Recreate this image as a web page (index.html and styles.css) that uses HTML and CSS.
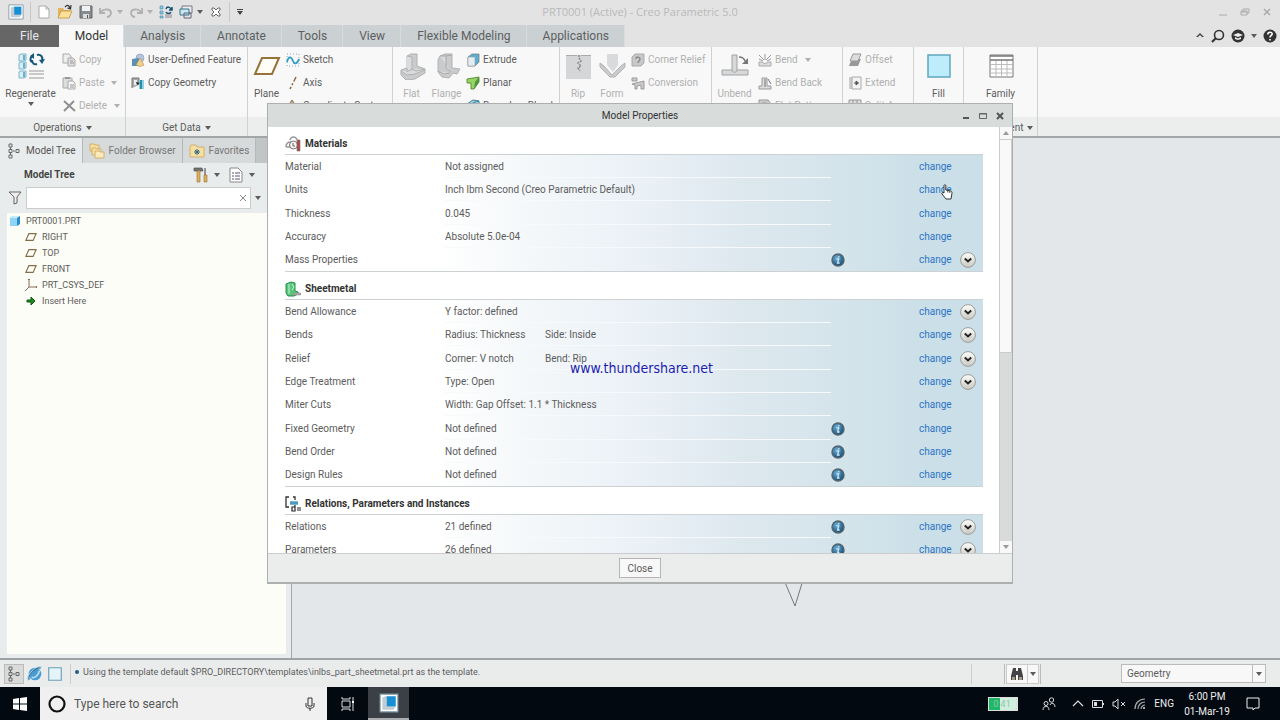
FILE: index.html
```html
<!DOCTYPE html>
<html lang="en">
<head>
    <meta charset="utf-8">
    <title>PRT0001 (Active) - Creo Parametric 5.0</title>
    <link rel="stylesheet" href="styles.css">
</head>
<body>
    <!-- shared icons -->
    <svg class="sprite" aria-hidden="true">
        <defs>
            <radialGradient id="ball" cx="40%" cy="35%" r="70%"><stop offset="0" stop-color="#6db4dc"/><stop offset="1" stop-color="#0d4670"/></radialGradient>
            <linearGradient id="knob" x2="0" y2="1"><stop offset="0" stop-color="#fdfdfb"/><stop offset="1" stop-color="#c9c9c2"/></linearGradient>
        </defs>
        <symbol id="i-down" viewBox="0 0 6 4"><path d="M0 0h6L3 4z" fill="currentColor"/></symbol>
        <symbol id="i-info" viewBox="0 0 14 14"><circle cx="7" cy="7" r="6" fill="url(#ball)" stroke="#56646e" stroke-width="1.4"/><path d="M5.500 5.800h2.200L6.600 10h2M7.800 3v1.400" stroke="#d4e8f3" stroke-width="1.300" fill="none"/></symbol>
        <symbol id="i-more" viewBox="0 0 16 16"><circle cx="8" cy="8" r="7.400" fill="url(#knob)" stroke="#9a9c98"/><path d="M4.800 6.500L8 9.500l3.200-3" fill="none" stroke="#222" stroke-width="2"/></symbol>
        <symbol id="i-plane" viewBox="0 0 14 12"><path d="M4.500 2h8.500l-3.500 8H1z" fill="none" stroke="#8a6d45" stroke-width="1.300"/></symbol>
        <symbol id="i-tree" viewBox="0 0 14 16"><path d="M2 1h3v3H2zM2 6.500h3v3H2zM2 12h3v3H2zM9 6.500h3v3H9zM3.500 4v2M3.500 10v2M6 8h2" fill="none" stroke="#666"/></symbol>
        <symbol id="i-creo" viewBox="0 0 18 18"><path d="M1 1h16v16H1z" fill="#fff" stroke="#7e98a8"/><path d="M3 4l3-1h9v9l-2 3H3z" fill="#c3ccd2"/><path d="M7 3h8v9H7z" fill="#1590d4"/></symbol>
        <symbol id="i-folder" viewBox="0 0 16 14"><path d="M1 3l1-2h5l1 2h7v10H1z" fill="#f7dfa0" stroke="#d0b070"/></symbol>
    </svg>

    <header class="titlebar">
        <div class="quick">
            <svg class="ic16" viewBox="0 0 18 18"><use href="#i-creo"/></svg>
            <span class="bar"></span>
            <button aria-label="New"><svg class="ic14" viewBox="0 0 14 14"><path d="M2 1h7l3 3v9H2z" fill="#fff" stroke="#aaa"/><path d="M9 1v3h3" fill="none" stroke="#aaa"/></svg></button>
            <button aria-label="Open"><svg class="ic16" viewBox="0 0 16 16"><path d="M1 14V4h5l1 2h6v8z" fill="#e3b55c"/><path d="M1 14l3-7h11l-3 7z" fill="#ffdf99" stroke="#b88b38" stroke-width=".7"/><path d="M8 3c3-3 4-1 5 1M14 1l-.5 4-3-1" fill="none" stroke="#333" stroke-width="1.200"/></svg></button>
            <button aria-label="Save"><svg class="ic14" viewBox="0 0 14 14"><path d="M1 1h12v12H1z" fill="#858b90" stroke="#666"/><path d="M3 1h8v5H3z" fill="#eef2f4"/><path d="M4 9h6v4H4z" fill="#ddd"/><path d="M8 10h1v3H8z" fill="#555"/></svg></button>
            <button aria-label="Undo" class="off"><svg class="ic14" viewBox="0 0 14 14"><path d="M1 3v5h5M2 7c3-4 10-3 10 1 0 2-2 4-4 4" fill="none" stroke="currentColor" stroke-width="1.800"/></svg><svg class="caret"><use href="#i-down"/></svg></button>
            <button aria-label="Redo" class="off"><svg class="ic14" viewBox="0 0 14 14"><path d="M13 3v5H8M12 7C9 3 2 4 2 8c0 2 2 4 4 4" fill="none" stroke="currentColor" stroke-width="1.800"/></svg><svg class="caret"><use href="#i-down"/></svg></button>
            <button aria-label="Regenerate"><svg class="ic14" viewBox="0 0 14 14"><path d="M1 1h3v3H1zM1 6h3v3H1zM1 11h3v2H1z" fill="#8cc8e4" stroke="#3d88aa" stroke-width=".6"/><path d="M7 4c1-3 4-2 5 0M13 2v3h-3M12 7c-1 2-4 2-5 0" fill="none" stroke="#134f70" stroke-width="1.500"/><path d="M6 10h7M6 12h7" stroke="#888"/></svg></button>
            <button aria-label="Windows"><svg class="ic14" viewBox="0 0 14 14"><path d="M3 1h10v7H3z" fill="#eee" stroke="#778"/><path d="M1 4h9v6H1z" fill="#c9e6f2" stroke="#37708c"/><path d="M5 8h7v5H5z" fill="none" stroke="#667"/></svg><svg class="caret"><use href="#i-down"/></svg></button>
            <button aria-label="Close window" class="gapped"><svg class="ic10" viewBox="0 0 10 10"><path d="M1 1h2l2 2 2-2h2v2L7 5l2 2v2H7L5 7 3 9H1V7l2-2-2-2z" fill="#fff" stroke="#666"/></svg></button>
            <span class="bar"></span>
            <button aria-label="Customize"><svg class="ic8" viewBox="0 0 8 8"><path d="M1 1h6v1H1zM1 3h6L4 7z" fill="#444"/></svg></button>
        </div>
        <h1>PRT0001 (Active) - Creo Parametric 5.0</h1>
        <div class="winbtns">
            <button aria-label="Minimize"><svg class="ic10" viewBox="0 0 10 10"><path d="M1 8h8" stroke="currentColor"/></svg></button>
            <button aria-label="Restore"><svg class="ic10" viewBox="0 0 10 10"><path d="M1 4h6v4H1zM3 4V2h6v4H7M1 5h6" fill="none" stroke="currentColor"/></svg></button>
            <button aria-label="Close"><svg class="ic10" viewBox="0 0 10 10"><path d="M2 2l6 6M8 2L2 8" stroke="currentColor" stroke-width="1.500"/></svg></button>
        </div>
    </header>

    <nav class="tabs">
        <button class="tab file">File</button>
        <button class="tab active">Model</button>
        <button class="tab">Analysis</button>
        <button class="tab">Annotate</button>
        <button class="tab">Tools</button>
        <button class="tab">View</button>
        <button class="tab">Flexible Modeling</button>
        <button class="tab">Applications</button>
        <div class="help">
            <button aria-label="Minimize ribbon"><svg class="ic10" viewBox="0 0 10 10"><path d="M1 6l4-4 4 4H7L5 4 3 6z" fill="#444"/></svg></button>
            <button aria-label="Search"><svg class="ic14" viewBox="0 0 14 14"><circle cx="8" cy="6" r="4.500" fill="none" stroke="#333" stroke-width="1.600"/><path d="M5 9l-4 4" stroke="#333" stroke-width="2.200"/></svg></button>
            <button aria-label="Learning"><svg class="ic14" viewBox="0 0 14 14"><circle cx="7" cy="7" r="6.500" fill="#333"/><path d="M2 6l5-2 5 2-5 2z" fill="#eee"/><path d="M4 8l3 1.500L10 8v2l-3 1-3-1z" fill="#eee"/></svg><svg class="caret"><use href="#i-down"/></svg></button>
            <button aria-label="Help"><svg class="ic14" viewBox="0 0 14 14"><circle cx="7" cy="7" r="6.500" fill="#333"/><path d="M4.800 5.500C4.800 2.500 9.200 2.500 9.200 5 9.200 6.500 7 6.500 7 8.500M7 10v1.500" fill="none" stroke="#fff" stroke-width="1.600"/></svg></button>
        </div>
    </nav>

    <section class="ribbon">
        <div class="group operations">
            <div class="tools">
                <button class="big"><svg class="ic28" viewBox="0 0 28 28"><path d="M2 3l2-1h5v6l-2 1H2zM2 11l2-1h5v6l-2 1H2zM2 20l2-1h5v6l-2 1H2z" fill="#d8eef7" stroke="#7ab5cc"/><path d="M7 3v5M7 11v5M7 20v5" stroke="#4f9ab8" stroke-width="1.500"/><path d="M20 3c4-1 6 2 5 5M15 10c-3-2-1-6 1-6M20 12c-3 1-5-1-5-4" fill="none" stroke="#14597c" stroke-width="2"/><path d="M17 1v6l-4-3zM28 7l-6 1 3 4z" fill="#14597c"/><path d="M12 19h15M12 22h15M12 26h15" stroke="#999"/></svg>Regenerate<svg class="caret"><use href="#i-down"/></svg></button>
                <div class="stack off">
                    <button><svg class="ic14" viewBox="0 0 14 14"><path d="M1 1h6l2 2v7H1z" fill="#eee" stroke="#aaa"/><path d="M6 5h5l2 2v6H6z" fill="#ddd" stroke="#aaa"/><path d="M8 8h3M8 10h4" stroke="#999"/></svg>Copy</button>
                    <button><svg class="ic14" viewBox="0 0 14 14"><path d="M1 2h9v10H1z" fill="#ddd" stroke="#aaa"/><path d="M3 1h5v2H3z" fill="#999"/><path d="M6 5h5l2 2v6H6z" fill="#f3f3f3" stroke="#aaa"/><path d="M8 9h4M8 11h4" stroke="#999"/></svg>Paste<svg class="caret"><use href="#i-down"/></svg></button>
                    <button><svg class="ic14" viewBox="0 0 14 14"><path d="M2 2l11 10M12 2L2 12" stroke="#909090" stroke-width="2"/></svg>Delete<svg class="caret"><use href="#i-down"/></svg></button>
                </div>
            </div>
            <div class="label">Operations<svg class="caret"><use href="#i-down"/></svg></div>
        </div>
        <div class="group getdata">
            <div class="tools">
                <div class="stack">
                    <button><svg class="ic14" viewBox="0 0 14 14"><circle cx="9" cy="5" r="4" fill="#b4c4de" stroke="#8395b5" stroke-width=".6"/><path d="M1 6l7-1v8H1z" fill="#5a90b8"/><path d="M9 5l4 7-4 1.500L5 12z" fill="#efd08e" stroke="#b58c3e" stroke-width=".6"/></svg>User-Defined Feature</button>
                    <button><svg class="ic14" viewBox="0 0 14 14"><path d="M1 12V2h7v7" fill="#aaa" stroke="#777"/><path d="M3 4h3v5H3z" fill="#eee"/><path d="M8 4h5v9H8z" fill="#8ed2e6"/><path d="M10 4v9" stroke="#2d8ba8" stroke-width="2"/><path d="M5 6l4 1-3 2z" fill="#222"/></svg>Copy Geometry</button>
                </div>
            </div>
            <div class="label">Get Data<svg class="caret"><use href="#i-down"/></svg></div>
        </div>
        <div class="group datum">
            <div class="tools">
                <button class="big"><svg class="ic28" viewBox="0 0 28 28"><path d="M9 6h17l-7 16H2z" fill="#fffdf5" stroke="#94723a" stroke-width="2"/></svg>Plane</button>
                <div class="stack">
                    <button><svg class="ic14" viewBox="0 0 14 14"><path d="M1 1h12v12H1z" fill="none" stroke="#8aa6c0" stroke-dasharray="1 2"/><path d="M1 9c2-8 5-4 6-1s4 4 6-2" fill="none" stroke="#2d9bc4" stroke-width="1.800"/></svg>Sketch</button>
                    <button><svg class="ic14" viewBox="0 0 14 14"><path d="M10 1L4 13" stroke="#8a6b3a" stroke-width="1.500" stroke-dasharray="5 2 2 2"/></svg>Axis</button>
                    <button><svg class="ic14" viewBox="0 0 14 14"><path d="M6 2v8l7 1M6 10l-4 3M4 4l2-3 2 3" fill="none" stroke="#8a6b3a"/></svg>Coordinate System</button>
                </div>
            </div>
            <div class="label"></div>
        </div>
        <div class="group shapes">
            <div class="tools">
                <button class="big off"><svg class="ic28" viewBox="0 0 28 28"><path d="M9 4l4-2h6v12l8 3v4l-10 6-9 1-5-5v-5l6-2z" fill="#c9cbcc" stroke="#b0b2b3"/><path d="M9 4l5 1v12l-5 3v-4M14 17l4 2 9-2M3 19l6 4 8-1 10-4" fill="#dadcdd" stroke="#b0b2b3"/></svg>Flat</button>
                <button class="big off"><svg class="ic28" viewBox="0 0 28 28"><path d="M7 4l5-2h7v14l8 1-3 5-4-1-4 5-7-1-4-5V8z" fill="#c9cbcc" stroke="#b0b2b3"/><path d="M7 4h6v12l5 4M19 3l-6 1M5 19l6 3 6-1" fill="#dadcdd" stroke="#aaa"/></svg>Flange</button>
                <div class="stack">
                    <button><svg class="ic14" viewBox="0 0 14 14"><path d="M2 4l4-3h7v8l-4 4H2z" fill="#5ab0d2" stroke="#777" stroke-width=".7"/><path d="M2 4h7v9H2z" fill="#e4eef2" stroke="#999" stroke-width=".6"/></svg>Extrude</button>
                    <button><svg class="ic14" viewBox="0 0 14 14"><path d="M1 3l12-2v5l-5 7H5V7H1z" fill="#95d65e" stroke="#447b28" stroke-width=".8"/><path d="M9 6l4-5v5l-5 7z" fill="#4e9444"/></svg>Planar</button>
                    <button><svg class="ic14" viewBox="0 0 14 14"><path d="M1 5l6-4 6 1v8l-6 3-6-2z" fill="#9fd3e6" stroke="#3c7f99"/><path d="M3 8c3-5 7-5 10-6" fill="none" stroke="#3c7f99"/></svg>Boundary Blend</button>
                </div>
            </div>
            <div class="label"></div>
        </div>
        <div class="group engineering off">
            <div class="tools">
                <button class="big"><svg class="ic28" viewBox="0 0 28 28"><path d="M2 3h25v24H2z" fill="#d4d6d7"/><path d="M2 3.500h11M17 3.500h10" stroke="#aaa"/><path d="M15 3v3l2 3-3 2 3 3-3 2 2 3" fill="none" stroke="#888" stroke-width="1.500" stroke-dasharray="2 1"/></svg>Rip</button>
                <button class="big"><svg class="ic28" viewBox="0 0 28 28"><path d="M9 2h11v11l-5 7-6-7z" fill="#d8dadb"/><path d="M2 11l4 3 8 9 9-9 4-3v4l-10 10h-5L2 15z" fill="#c9cbcc" stroke="#b0b2b3"/></svg>Form</button>
                <div class="stack">
                    <button><svg class="ic14" viewBox="0 0 14 14"><path d="M1 4l3-3h9v9l-3 3H1z" fill="#c6c8c9" stroke="#aaa"/><path d="M5 6c0-3 4-2 4 0S7 8 7 10" fill="none" stroke="#888" stroke-width="1.500"/></svg>Corner Relief</button>
                    <button><svg class="ic14" viewBox="0 0 14 14"><path d="M1 2h5v3H1zM1 8l12-3v8h-3V9l-4 1v3H4V9z" fill="#ccc" stroke="#999"/></svg>Conversion</button>
                </div>
            </div>
            <div class="label"></div>
        </div>
        <div class="group bends off">
            <div class="tools">
                <button class="big"><svg class="ic28" viewBox="0 0 28 28"><path d="M11 3h5v15h11v5H1v-5h10z" fill="#d6d8d9" stroke="#a0a2a3"/><path d="M11 18c0 3 5 3 5 0" fill="none" stroke="#a0a2a3"/><path d="M18 5c3 0 5 1 6 4" fill="none" stroke="#777" stroke-width="1.500"/><path d="M27 6v6h-6z" fill="#777"/></svg>Unbend</button>
                <div class="stack">
                    <button><svg class="ic14" viewBox="0 0 14 14"><path d="M1 9h3l3 2 3-2h3v4H1z" fill="#ddd" stroke="#aaa"/><path d="M1 2l5 5M13 2L8 7M7 1v6M1 6l4 2M13 6L9 8" stroke="#999"/></svg>Bend<svg class="caret"><use href="#i-down"/></svg></button>
                    <button><svg class="ic14" viewBox="0 0 14 14"><path d="M1 10h3V2h5v8h4v3H1z" fill="#ddd" stroke="#999"/><path d="M7 3v8M10 3l3 5" stroke="#777"/></svg>Bend Back</button>
                    <button><svg class="ic14" viewBox="0 0 14 14"><path d="M1 1h9l3 4v8H1z" fill="#ccc" stroke="#999"/><path d="M4 4h5v6H4z" fill="#eee" stroke="#999"/></svg>Flat Pattern<svg class="caret"><use href="#i-down"/></svg></button>
                </div>
            </div>
            <div class="label"></div>
        </div>
        <div class="group editing off">
            <div class="tools">
                <div class="stack">
                    <button><svg class="ic14" viewBox="0 0 14 14"><path d="M2 10l3-4h8l-3 7H1z" fill="#999"/><path d="M5 1h8l-3 7H2z" fill="#ddd" stroke="#999"/></svg>Offset</button>
                    <button><svg class="ic14" viewBox="0 0 14 14"><path d="M1 1h3v12H1z" fill="#ccc"/><path d="M4 1h9v12H4z" fill="#f3f3f3" stroke="#aaa"/><path d="M6 7h3M8 5l2.500 2L8 9z" fill="#555" stroke="#555"/></svg>Extend</button>
                    <button><svg class="ic14" viewBox="0 0 14 14"><path d="M1 1h12v12H1zM1 5h12M1 9h12M5 1v12M9 1v12" fill="#ddd" stroke="#999"/></svg>Split Area</button>
                </div>
            </div>
            <div class="label"></div>
        </div>
        <div class="group surfaces">
            <div class="tools">
                <button class="big"><svg class="ic28" viewBox="0 0 28 28"><path d="M3 3h22v22H3z" fill="#bdecfb" stroke="#5fa6bf" stroke-width="1.500"/></svg>Fill</button>
            </div>
            <div class="label"></div>
        </div>
        <div class="group intent">
            <div class="tools">
                <button class="big"><svg class="ic28" viewBox="0 0 28 28"><path d="M3 3h23v22H3z" fill="#fff" stroke="#777"/><path d="M9 8v17M14.500 8v17M20 8v17M3 12.500h23M3 17h23M3 21h23" stroke="#bbb"/><path d="M3 4h23M3 8h23" stroke="#777" stroke-width="1.500"/></svg>Family</button>
            </div>
            <div class="label">Model Intent<svg class="caret"><use href="#i-down"/></svg></div>
        </div>
        <div class="group rest"><div class="tools"></div><div class="label"></div></div>
    </section>

    <main class="workspace">
        <aside class="navigator">
            <div class="navtabs">
                <button class="navtab active"><svg class="ic16" viewBox="0 0 14 16"><use href="#i-tree"/></svg>Model Tree</button>
                <button class="navtab"><svg class="ic16" viewBox="0 0 16 16"><path d="M1 1h4l1 1h4v6H1z" fill="#f7dfa0" stroke="#d0b070"/><path d="M3 5h4l1 1h4v6H3z" fill="#f7dfa0" stroke="#d0b070"/><path d="M6 8h4l1 1h4v6H6z" fill="#fbeabb" stroke="#d0b070"/></svg>Folder Browser</button>
                <button class="navtab"><svg class="ic16" viewBox="0 0 16 14"><use href="#i-folder"/><path d="M8 5v6M5 8h6M6 6l4 4M10 6l-4 4" stroke="#246a8c"/></svg>Favorites</button>
            </div>
            <div class="navhead">
                <h2>Model Tree</h2>
                <button aria-label="Tree settings"><svg class="ic16" viewBox="0 0 16 16"><path d="M1 1h8l1 3H7V3H5v1H1z" fill="#777" stroke="#444" stroke-width=".6"/><path d="M4 4h3v11H4z" fill="#e0b060" stroke="#98702a" stroke-width=".6"/><path d="M12 1v7" stroke="#777" stroke-width="1.500"/><path d="M11 8h3v7h-3z" fill="#e0b060" stroke="#98702a" stroke-width=".6"/></svg><svg class="caret"><use href="#i-down"/></svg></button>
                <button aria-label="Tree display"><svg class="ic16" viewBox="0 0 16 16"><path d="M2 1h8l4 4v10H2z" fill="#fff" stroke="#888"/><path d="M4 6h2M4 9h2M4 12h2M7 6h5M7 9h5M7 12h5" stroke="#557"/></svg><svg class="caret"><use href="#i-down"/></svg></button>
            </div>
            <div class="filter">
                <svg class="ic14" viewBox="0 0 14 14"><path d="M1 1h12L9 6v6l-3 1V6z" fill="#eee" stroke="#666"/></svg>
                <div class="searchbox">
                    <input type="text" aria-label="Filter tree">
                    <button aria-label="Clear"><svg class="ic8" viewBox="0 0 8 8"><path d="M1 1l6 6M7 1L1 7" stroke="#888"/></svg></button>
                </div>
                <button aria-label="Filter options"><svg class="caret"><use href="#i-down"/></svg></button>
            </div>
            <ul class="tree">
                <li class="root"><svg class="ic12" viewBox="0 0 12 12"><path d="M1 3l3-2h7v8l-3 2H1z" fill="#2b8bc4"/><path d="M1 3h7v8H1z" fill="#8fd4f6"/><path d="M1 3l3-2h7L8 3z" fill="#c9ecfb"/></svg>PRT0001.PRT</li>
                <li><svg class="ic12" viewBox="0 0 14 12"><use href="#i-plane"/></svg>RIGHT</li>
                <li><svg class="ic12" viewBox="0 0 14 12"><use href="#i-plane"/></svg>TOP</li>
                <li><svg class="ic12" viewBox="0 0 14 12"><use href="#i-plane"/></svg>FRONT</li>
                <li><svg class="ic12" viewBox="0 0 12 12"><path d="M4 0v8h8M4 8l-4 4M3 1l1-1 1 1M11 7l1 1-1 1" fill="none" stroke="#8a6d55"/></svg>PRT_CSYS_DEF</li>
                <li><svg class="ic12" viewBox="0 0 12 12"><path d="M2 5h4V2l4 4-4 4V7H2z" fill="#1f8a22" stroke="#0c5a10"/></svg>Insert Here</li>
            </ul>
        </aside>
        <div class="canvas">
            <svg class="csys" viewBox="0 0 20 30"><path d="M0 1l11 26 8-26" fill="none" stroke="#777"/></svg>
        </div>
    </main>

    <footer class="status">
        <button class="pressed" aria-label="Model tree"><svg class="ic16" viewBox="0 0 14 16"><use href="#i-tree"/></svg></button>
        <button aria-label="Web browser"><svg class="ic16" viewBox="0 0 14 14"><circle cx="7" cy="7" r="5.500" fill="#469bd0"/><path d="M1 13C-1 9 9-1 13 1M4 10c3 1 6-2 7-6" fill="none" stroke="#b7dcf0" stroke-width="1.500"/><path d="M2 12C0 8 9 0 12 2" fill="none" stroke="#2f6f9a"/></svg></button>
        <button aria-label="Full screen"><svg class="ic16" viewBox="0 0 14 14"><path d="M1.500 1.500h11v11h-11z" fill="#e5f4f9" stroke="#6a9fb6"/></svg></button>
        <p class="message"><span class="dot"></span>Using the template default $PRO_DIRECTORY\templates\inlbs_part_sheetmetal.prt as the template.</p>
        <div class="find">
            <button aria-label="Find"><svg class="ic14" viewBox="0 0 14 14"><path d="M3 1h3v3h2V1h3l2 8v4H8V8H6v5H1V9z" fill="#444"/><path d="M2 10h3v3H2zM9 10h3v3H9z" fill="#a39a80"/></svg></button>
            <button aria-label="Find options"><svg class="caret"><use href="#i-down"/></svg></button>
        </div>
        <div class="selectbox">
            <select aria-label="Selection filter"><option>Geometry</option></select>
            <span class="drop"><svg class="caret"><use href="#i-down"/></svg></span>
        </div>
    </footer>

    <div class="taskbar">
        <button class="start" aria-label="Start"><svg class="ic14" viewBox="0 0 14 14"><path d="M0 2l6-1v5.500H0zM7 1l7-1v6.500H7zM0 7.500h6V13l-6-1zM7 7.500h7V14l-7-1z" fill="#fff"/></svg></button>
        <div class="cortana">
            <svg class="ic18" viewBox="0 0 18 18"><circle cx="9" cy="9" r="7.500" fill="none" stroke="#111" stroke-width="2.200"/></svg>
            <input type="text" placeholder="Type here to search" aria-label="Search Windows">
            <svg class="ic14" viewBox="0 0 14 14"><path d="M5 1h4v8H5zM3 6v3c0 3 8 3 8 0V6M7 11v3" fill="none" stroke="#333"/></svg>
        </div>
        <button class="app" aria-label="Task view"><svg class="ic14" viewBox="0 0 14 14"><path d="M1 4h8v6H1zM1 0v2h8V0M1 14v-2h8v2M12 0v14" fill="none" stroke="#ddd"/><path d="M11 4h2v2h-2z" fill="#fff"/></svg></button>
        <button class="app running" aria-label="Creo Parametric"><svg class="ic20" viewBox="0 0 18 18"><use href="#i-creo"/></svg></button>
        <div class="tray">
            <span class="battery">0:41</span>
            <svg class="ic14 people" viewBox="0 0 14 14"><circle cx="9.500" cy="3" r="2.200" fill="none" stroke="#ddd"/><circle cx="4" cy="6.500" r="2" fill="none" stroke="#ddd"/><path d="M1 13c0-5 6-5 6 0M8 8c1-3 5-2 5 2" fill="none" stroke="#ddd"/></svg>
            <svg class="ic12" viewBox="0 0 12 12"><path d="M1 8l5-5 5 5" fill="none" stroke="#ddd" stroke-width="1.200"/></svg>
            <svg class="ic12" viewBox="0 0 12 12"><path d="M.5 2.500h10v7H.5zM11.500 5v2" fill="none" stroke="#ddd"/><path d="M2 4h3v4H2z" fill="#ddd"/></svg>
            <svg class="ic14" viewBox="0 0 14 14"><path d="M1 5h2l3-3v10L3 9H1zM9 5l4 4M13 5L9 9" fill="none" stroke="#ddd"/></svg>
            <svg class="ic12" viewBox="0 0 12 12"><path d="M1 11C1 5 5 1 11 1M4 11c0-4 3-7 7-7M7 11c0-2 2-4 4-4" fill="none" stroke="#aaa" stroke-width="1.200"/><circle cx="10" cy="10" r="1" fill="#ddd"/></svg>
            <span class="lang">ENG</span>
            <div class="clock"><span>6:00 PM</span><span>01-Mar-19</span></div>
            <svg class="ic14" viewBox="0 0 14 14"><path d="M1 1h12v10H9l-2 2v-2H1z" fill="none" stroke="#eee"/></svg>
        </div>
    </div>

    <div class="dialog" role="dialog" aria-labelledby="dlg-title">
        <div class="dlg-head">
            <h2 id="dlg-title">Model Properties</h2>
            <div class="dlg-btns">
                <button aria-label="Minimize"><svg class="ic10" viewBox="0 0 10 10"><path d="M2 7h6" stroke="#555" stroke-width="2"/></svg></button>
                <button aria-label="Maximize"><svg class="ic10" viewBox="0 0 10 10"><path d="M1.500 2.500h7v5h-7zM1 3h8" fill="none" stroke="#666"/></svg></button>
                <button aria-label="Close dialog"><svg class="ic10" viewBox="0 0 10 10"><path d="M2 2l6 6M8 2L2 8" stroke="#555" stroke-width="2"/></svg></button>
            </div>
        </div>
        <div class="dlg-body">
            <div class="props">
                <h3><svg class="ic16" viewBox="0 0 16 16"><path d="M5 4c1-4 6-4 7 0M1 11c0-3 2-5 5-5M1 11h5" fill="none" stroke="#999" stroke-width="1.500"/><circle cx="8.500" cy="9" r="4" fill="#f3f3f3" stroke="#777"/><path d="M8 7v3h2" fill="none" stroke="#666"/><path d="M12 4h3v11h-3z" fill="#b24545" stroke="#777" stroke-width=".6"/></svg>Materials</h3>
                <table>
                    <tr><th>Material</th><td class="val">Not assigned</td><td class="inf"></td><td class="chg"><a href="#">change</a></td><td class="exp"></td></tr>
                    <tr><th>Units</th><td class="val">Inch lbm Second (Creo Parametric Default)</td><td class="inf"></td><td class="chg"><a href="#">change</a></td><td class="exp"></td></tr>
                    <tr><th>Thickness</th><td class="val">0.045</td><td class="inf"></td><td class="chg"><a href="#">change</a></td><td class="exp"></td></tr>
                    <tr><th>Accuracy</th><td class="val">Absolute 5.0e-04</td><td class="inf"></td><td class="chg"><a href="#">change</a></td><td class="exp"></td></tr>
                    <tr><th>Mass Properties</th><td class="val"></td><td class="inf"><button aria-label="Info"><svg class="ic14"><use href="#i-info"/></svg></button></td><td class="chg"><a href="#">change</a></td><td class="exp"><button aria-label="Expand"><svg class="ic16"><use href="#i-more"/></svg></button></td></tr>
                </table>
                <h3><svg class="ic16" viewBox="0 0 16 16"><path d="M1 3l5-2 4 1v8l3 1v2l-4 2H3l-2-3z" fill="#58c57c" stroke="#2a8a4c"/><path d="M4 3v10M7 3l2 3-2 3" fill="none" stroke="#c8f5d4"/><path d="M8 12h8v2H9z" fill="#aaa" stroke="#888" stroke-width=".5"/></svg>Sheetmetal</h3>
                <table>
                    <tr><th>Bend Allowance</th><td class="val">Y factor: defined</td><td class="inf"></td><td class="chg"><a href="#">change</a></td><td class="exp"><button aria-label="Expand"><svg class="ic16"><use href="#i-more"/></svg></button></td></tr>
                    <tr><th>Bends</th><td class="val"><span class="part">Radius: Thickness</span>Side: Inside</td><td class="inf"></td><td class="chg"><a href="#">change</a></td><td class="exp"><button aria-label="Expand"><svg class="ic16"><use href="#i-more"/></svg></button></td></tr>
                    <tr><th>Relief</th><td class="val"><span class="part">Corner: V notch</span>Bend: Rip</td><td class="inf"></td><td class="chg"><a href="#">change</a></td><td class="exp"><button aria-label="Expand"><svg class="ic16"><use href="#i-more"/></svg></button></td></tr>
                    <tr><th>Edge Treatment</th><td class="val">Type: Open</td><td class="inf"></td><td class="chg"><a href="#">change</a></td><td class="exp"><button aria-label="Expand"><svg class="ic16"><use href="#i-more"/></svg></button></td></tr>
                    <tr><th>Miter Cuts</th><td class="val">Width: Gap Offset: 1.1 * Thickness</td><td class="inf"></td><td class="chg"><a href="#">change</a></td><td class="exp"></td></tr>
                    <tr><th>Fixed Geometry</th><td class="val">Not defined</td><td class="inf"><button aria-label="Info"><svg class="ic14"><use href="#i-info"/></svg></button></td><td class="chg"><a href="#">change</a></td><td class="exp"></td></tr>
                    <tr><th>Bend Order</th><td class="val">Not defined</td><td class="inf"><button aria-label="Info"><svg class="ic14"><use href="#i-info"/></svg></button></td><td class="chg"><a href="#">change</a></td><td class="exp"></td></tr>
                    <tr><th>Design Rules</th><td class="val">Not defined</td><td class="inf"><button aria-label="Info"><svg class="ic14"><use href="#i-info"/></svg></button></td><td class="chg"><a href="#">change</a></td><td class="exp"></td></tr>
                </table>
                <h3><svg class="ic16" viewBox="0 0 16 16"><path d="M4 1H1v10h3M8 1h2v3" fill="none" stroke="#333" stroke-width="1.300"/><path d="M5 5h8v4H5z" fill="#72b7d4"/><path d="M5 7h8" stroke="#2a789c"/><path d="M7 11h3v4H7zM10 9v6M12 12h4M12 14h4" fill="none" stroke="#222" stroke-width="1.200"/></svg>Relations, Parameters and Instances</h3>
                <table>
                    <tr><th>Relations</th><td class="val">21 defined</td><td class="inf"><button aria-label="Info"><svg class="ic14"><use href="#i-info"/></svg></button></td><td class="chg"><a href="#">change</a></td><td class="exp"><button aria-label="Expand"><svg class="ic16"><use href="#i-more"/></svg></button></td></tr>
                    <tr><th>Parameters</th><td class="val">26 defined</td><td class="inf"><button aria-label="Info"><svg class="ic14"><use href="#i-info"/></svg></button></td><td class="chg"><a href="#">change</a></td><td class="exp"><button aria-label="Expand"><svg class="ic16"><use href="#i-more"/></svg></button></td></tr>
                </table>
            </div>
            <div class="scroll">
                <button aria-label="Scroll up"><svg class="caret up"><use href="#i-down"/></svg></button>
                <div class="track"><div class="thumb"></div></div>
                <button aria-label="Scroll down"><svg class="caret"><use href="#i-down"/></svg></button>
            </div>
        </div>
        <div class="dlg-foot"><button class="close">Close</button></div>
    </div>

    <div class="watermark">www.thundershare.net</div>
    <svg class="pointer" viewBox="0 0 12 16"><path d="M3 9V1.500c0-1 1.800-1 1.800 0V6l5 1c1 .3 1.200 1 1.200 2l-1 6H5L1 10c-.5-1 .7-2 2-1z" fill="#fff" stroke="#222" stroke-width=".9"/><path d="M6.800 6.500v2M8.800 7v2" stroke="#222" stroke-width=".8"/></svg>
</body>
</html>
```
FILE: styles.css
```css
* {
    box-sizing: border-box;
}

body {
    margin: 0;
    height: 100vh;
    display: flex;
    flex-direction: column;
    overflow: hidden;
    background-color: #e3e3e3;
    color: #5c5c5c;
    font-family: Roboto, "Open Sans", sans-serif;
    font-size: 10px;
    line-height: 16px;
}

h1, h2, h3, p, ul {
    margin: 0;
    padding: 0;
    font-size: inherit;
}

button {
    display: flex;
    align-items: center;
    margin: 0;
    padding: 0;
    border: none;
    background: none;
    color: inherit;
    font: inherit;
    white-space: nowrap;
}

input, select {
    font: inherit;
    color: inherit;
    border: none;
    outline: none;
    background: none;
    min-width: 0;
}

svg {
    display: block;
    flex: none;
}

.sprite {
    position: absolute;
    width: 0;
    height: 0;
}

.caret { width: 6px; height: 4px; }
.up { transform: rotate(180deg); }
.ic8 { width: 8px; height: 8px; }
.ic10 { width: 10px; height: 10px; }
.ic12 { width: 12px; height: 12px; }
.ic14 { width: 14px; height: 14px; }
.ic16 { width: 16px; height: 16px; }
.ic18 { width: 18px; height: 18px; }
.ic20 { width: 20px; height: 20px; }
.ic28 { width: 28px; height: 28px; }

.off {
    color: #b0b0b0;
}

/* title bar */
.titlebar {
    flex: none;
    display: grid;
    grid-template-columns: 1fr auto 1fr;
    align-items: center;
    height: 24px;
    padding: 0 8px;
}

.titlebar h1 {
    font-family: "Open Sans", sans-serif;
    font-size: 11px;
    font-weight: normal;
    color: #b9b9b9;
}

.quick {
    display: flex;
    align-items: center;
    gap: 6px;
}

.quick button {
    gap: 4px;
}

.quick .gapped {
    padding: 0 2px;
}

.bar {
    width: 1px;
    height: 20px;
    background-color: #c8c8c8;
}

.winbtns {
    display: flex;
    justify-content: flex-end;
    gap: 12px;
    color: #aaa;
}

/* ribbon tabs */
.tabs {
    flex: none;
    display: flex;
    height: 23px;
    padding-top: 1px;
}

.tab {
    padding: 0 15px 0 16px;
    background-color: #cbd0d2;
    border-right: 1px solid #d8dcdd;
    font-size: 12px;
    color: #5b5f61;
}

.tab.file {
    padding: 0 20px;
    background-color: #666;
    border: none;
    color: #e8e8e8;
}

.tab.active {
    background-color: #f8f8f8;
    color: #333;
}

.help {
    margin-left: auto;
    display: flex;
    gap: 6px;
    padding-right: 3px;
}

.help button {
    gap: 6px;
}

/* ribbon */
.ribbon {
    flex: none;
    display: flex;
    height: 91px;
    background-color: #f8f8f8;
    border-bottom: 2px solid #a3a6a7;
}

.group {
    flex: none;
    display: flex;
    flex-direction: column;
    border-right: 1px solid #d0d2d2;
}

.tools {
    flex: 1;
    display: flex;
    min-height: 0;
    padding: 1px 0 0 1px;
}

.label {
    flex: none;
    display: flex;
    align-items: center;
    justify-content: center;
    gap: 4px;
    height: 19px;
    padding-top: 2px;
    background-color: #ebeeed;
    white-space: nowrap;
}

.operations { width: 126px; }
.getdata { width: 122px; }
.datum { width: 145px; }
.shapes { width: 167px; }
.engineering { width: 152px; }
.bends { width: 131px; }
.editing { width: 71px; }
.surfaces { width: 50px; }
.intent { width: 74px; }
.rest { flex: 1; border: none; }

.big {
    flex-direction: column;
    justify-content: flex-start;
    width: 35px;
    padding-top: 4px;
}

.big svg.ic28 {
    margin-bottom: 6px;
}

.operations .big { width: 59px; }
.engineering .big { width: 34px; }
.bends .big { width: 43px; }

.surfaces .tools, .intent .tools {
    padding-left: 0;
}

.surfaces .big, .intent .big { width: 100%; }

.stack {
    padding-left: 2px;
}

.stack button {
    height: 23px;
    gap: 3px;
}

.stack .caret {
    margin-left: 4px;
}

.getdata .stack, .editing .stack {
    padding-left: 4px;
}

/* navigator */
.workspace {
    flex: 1;
    display: flex;
    min-height: 0;
    background-color: #e3e7ea;
}

.navigator {
    flex: none;
    display: flex;
    flex-direction: column;
    width: 292px;
    padding-bottom: 4px;
    background-color: #e9ecec;
    border-right: 1px solid #a5a8aa;
}

.navtabs {
    display: flex;
    height: 25px;
    background-color: #c2c5c6;
}

.navtab {
    gap: 4px;
    padding: 0 6px;
    background-color: #d6dada;
    border-right: 1px solid #b4b8b9;
    color: #777;
}

.navtab.active {
    background-color: #e9ecec;
    color: #555;
}

.navhead {
    display: flex;
    align-items: center;
    gap: 8px;
    height: 23px;
    padding: 0 36px 0 24px;
}

.navhead h2 {
    flex: 1;
    color: #444;
}

.navhead button {
    gap: 5px;
}

.filter {
    display: flex;
    align-items: center;
    gap: 4px;
    height: 23px;
    padding: 0 30px 0 8px;
}

.searchbox {
    flex: 1;
    display: flex;
    height: 22px;
    padding-right: 3px;
    background-color: #fff;
    border: 1px solid #ccc;
}

.searchbox input {
    flex: 1;
}

.tree {
    flex: 1;
    margin: 4px 5px 0 7px;
    background-color: #fcfdf6;
    list-style: none;
    font-size: 9px;
}

.tree li {
    display: flex;
    align-items: center;
    gap: 5px;
    padding-left: 18px;
}

.tree .root {
    padding-left: 2px;
}

.canvas {
    flex: 1;
    position: relative;
}

.csys {
    position: absolute;
    left: 492px;
    bottom: 49px;
    width: 20px;
    height: 30px;
}

/* status bar */
.status {
    flex: none;
    display: flex;
    align-items: center;
    gap: 2px;
    height: 29px;
    padding: 0 14px 0 4px;
    background-color: #eaecec;
    border-top: 2px solid #9fa2a4;
}

.status > button {
    padding: 1px;
}

.status .pressed {
    background-color: #d9dbdb;
    border: 1px solid #bbb;
}

.message {
    flex: 1;
    display: flex;
    align-items: center;
    gap: 4px;
    margin-left: 4px;
    padding: 0 0 4px 4px;
    border-left: 1px solid #ccc;
    border-right: 1px solid #ccc;
    font-size: 9px;
}

.dot {
    width: 4px;
    height: 4px;
    border-radius: 50%;
    background-color: #1f5f80;
}

.find {
    display: flex;
    margin: 0 78px 0 30px;
    padding: 0 1px;
    border-left: 1px solid #bbb;
    border-right: 1px solid #bbb;
}

.find button {
    height: 20px;
    padding: 0 3px;
    background-color: #f8f8f8;
    border: 1px solid #ccc;
}

.find button + button {
    padding: 0 2px;
    border-left: none;
}

.selectbox {
    display: grid;
    width: 145px;
    height: 19px;
    background-color: #f8f8f8;
    border: 1px solid #bbb;
}

.selectbox select {
    grid-area: 1 / 1;
    padding: 0 5px;
    appearance: none;
}

.drop {
    grid-area: 1 / 1;
    justify-self: end;
    display: flex;
    align-items: center;
    padding: 0 3px;
    border-left: 1px solid #bbb;
    pointer-events: none;
}

/* taskbar */
.taskbar {
    flex: none;
    display: flex;
    height: 33px;
    background-color: #030911;
    color: #eee;
}

.start, .app {
    width: 41px;
    justify-content: center;
}

.start {
    width: 40px;
}

.running {
    background-color: #3b4047;
    border-bottom: 2px solid #a9adb1;
}

.cortana {
    display: flex;
    align-items: center;
    gap: 8px;
    width: 287px;
    padding: 0 10px 0 8px;
    background-color: #f0f0f0;
    font-size: 12px;
}

.cortana input {
    flex: 1;
    padding: 0;
}

.cortana input::placeholder {
    color: #555;
    opacity: 1;
}

.tray {
    margin-left: auto;
    display: flex;
    align-items: center;
    gap: 8px;
    padding-right: 20px;
}

.battery {
    width: 30px;
    height: 14px;
    padding-left: 4px;
    border: 1px solid #ddd;
    border-right-width: 2px;
    background: linear-gradient(90deg, #1fb768 40%, #cfeedd 40%);
    color: #92c4a8;
    font-size: 9px;
    line-height: 12px;
}

.people { margin: 0 8px 0 16px; }

.clock {
    display: flex;
    flex-direction: column;
    align-items: center;
    width: 50px;
    margin-right: 6px;
    line-height: 15px;
}

/* dialog */
.dialog {
    position: absolute;
    top: 103px;
    left: 50%;
    width: 746px;
    margin-left: -373px;
    background-color: #fff;
    border: 1px solid #adb0b0;
    border-bottom-width: 2px;
}

.dlg-head {
    display: grid;
    grid-template-columns: 1fr auto 1fr;
    align-items: center;
    height: 23px;
    padding: 1px 7px 0;
    background-color: #d8dcdb;
    color: #333;
}

.dlg-head h2 {
    grid-column: 2;
    font-weight: normal;
}

.dlg-btns {
    display: flex;
    justify-content: flex-end;
    gap: 7px;
}

.dlg-body {
    display: flex;
    height: 426px;
    overflow: hidden;
}

.props {
    flex: 1;
    padding: 0 16px 0 17px;
}

.props h3 {
    display: flex;
    align-items: center;
    gap: 4px;
    height: 27px;
    padding-top: 7px;
    color: #333;
}

.props table {
    width: 100%;
    table-layout: fixed;
    border-collapse: separate;
    border-spacing: 0;
    border-top: 1px solid #ccd2d4;
    border-bottom: 1px solid #ccd2d4;
    background: linear-gradient(90deg, #fff 22%, #f8fafb 30%, #e9f0f6 52%, #dde8ee 66%, #d4e4eb 80%, #cbdfe8 92%);
}

.props th, .props td {
    height: 23px;
    padding: 2px 0 0;
    border-bottom: 1px solid transparent;
    text-align: left;
    font-weight: normal;
}

.props tr:nth-child(3n) td {
    height: 24px;
}

.props th { width: 160px; }

.props .val {
    width: 386px;
    border-bottom-color: #f6fafc;
}

.props tr:last-child .val {
    border-bottom-color: transparent;
}

.props .chg { width: 41px; }
.props .exp { width: 23px; }

.part {
    display: inline-block;
    width: 100px;
}

.props a {
    color: #2a75c4;
    text-decoration: none;
}

.scroll {
    flex: none;
    display: flex;
    flex-direction: column;
    width: 13px;
    border-left: 1px solid #ccc;
}

.scroll button {
    justify-content: center;
    height: 12px;
    background-color: #f8f8f8;
    color: #999;
}

.track {
    flex: 1;
    background-color: #d9dbdb;
}

.thumb {
    height: 214px;
    background-color: #f9f9f9;
    border: 1px solid #ccc;
    border-left: none;
}

.dlg-foot {
    display: flex;
    justify-content: center;
    padding: 4px 0;
    background-color: #ebeded;
    border-top: 1px solid #ccc;
}

.close {
    height: 20px;
    padding: 1px 7px 0;
    background-color: #f8f8f8;
    border: 1px solid #b4b4b4;
}

.watermark {
    position: absolute;
    top: 358px;
    left: 570px;
    color: #1c1cb0;
    font: 14px/20px "DejaVu Sans Condensed", "DejaVu Sans", sans-serif;
}

.pointer {
    position: absolute;
    top: 184px;
    left: 941px;
    width: 12px;
    height: 16px;
}
```
